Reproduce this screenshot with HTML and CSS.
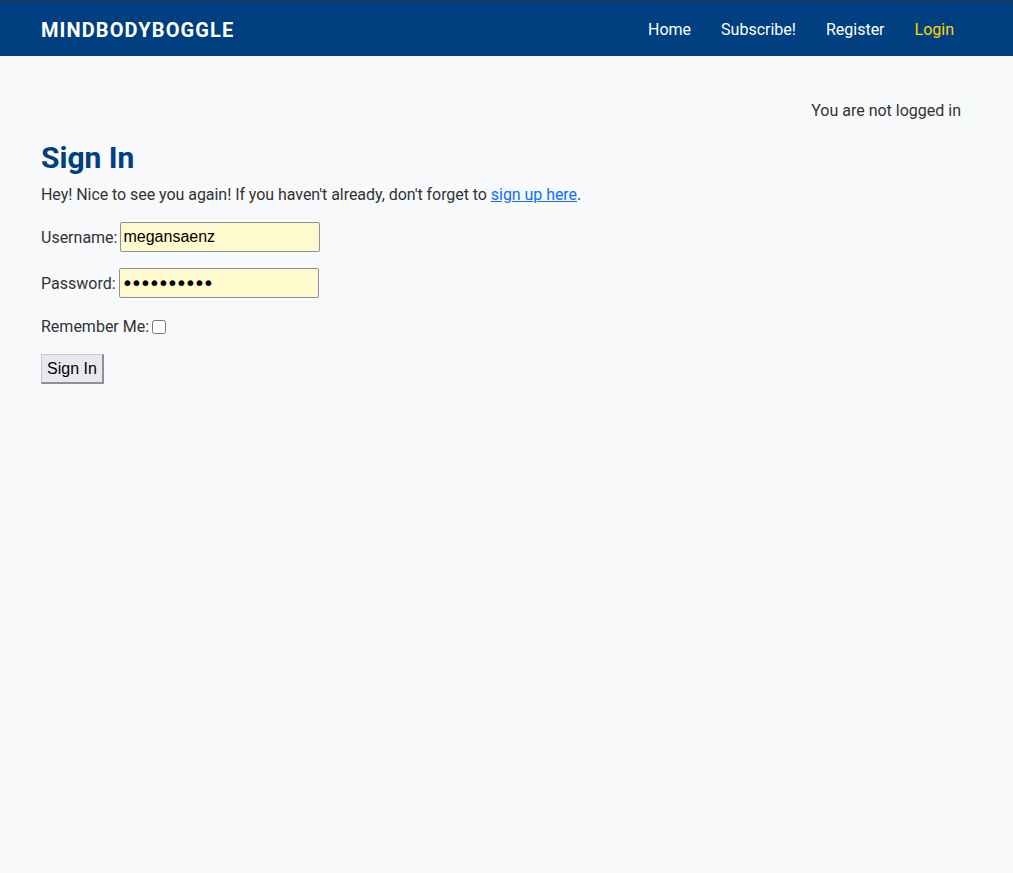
FILE: index.html
```html
<!DOCTYPE html>
<html>
<head>
<meta charset="utf-8">
<title>Sign In</title>
<link rel="stylesheet" href="styles.css">
</head>
<body>
<header class="topbar">
  <a class="brand" href="#">MINDBODYBOGGLE</a>
  <nav class="nav">
    <a href="#">Home</a>
    <a href="#">Subscribe!</a>
    <a href="#">Register</a>
    <a class="active" href="#">Login</a>
  </nav>
</header>
<main class="content">
  <p class="status">You are not logged in</p>
  <h1 class="title">Sign In</h1>
  <p class="intro">Hey! Nice to see you again! If you haven't already, don't forget to <a href="#">sign up here</a>.</p>
  <form class="login">
    <div class="row"><label>Username:</label> <input class="field" type="text" value="megansaenz"></div>
    <div class="row"><label>Password:</label> <input class="field pass" type="password" value="password12"></div>
    <div class="row row-check"><label>Remember Me:</label> <input class="check" type="checkbox"></div>
    <div class="row"><button class="btn" type="button">Sign In</button></div>
  </form>
</main>
</body>
</html>
```
FILE: styles.css
```css
html, body {
  margin: 0;
  padding: 0;
}
body {
  background: #f8f9fa;
  font-family: Roboto, "Liberation Sans", sans-serif;
  font-size: 16px;
  color: #333;
}
.topbar {
  display: flex;
  align-items: center;
  justify-content: space-between;
  height: 55px;
  border-top: 1px solid #2a2f3a;
  background: #004080;
  padding: 0 59px 0 41px;
}
.brand {
  color: #fff;
  font-weight: 700;
  font-size: 20px;
  letter-spacing: 1.1px;
  text-decoration: none;
  padding-top: 2px;
}
.nav {
  display: flex;
  gap: 30px;
  padding-top: 2px;
}
.nav a {
  color: #fff;
  text-decoration: none;
  font-size: 16px;
}
.nav a.active {
  color: #ffd700;
}
.content {
  padding: 0 52px 0 41px;
}
.status {
  text-align: right;
  margin: 0;
  padding-top: 45px;
  line-height: 19px;
}
.title {
  color: #004080;
  font-size: 30px;
  font-weight: 700;
  margin: 20px 0 0;
  line-height: 36px;
}
.intro {
  margin: 9px 0 0;
  line-height: 19px;
  letter-spacing: -0.05px;
}
.intro a {
  color: #0d6efd;
}
.login {
  margin-top: 18px;
}
.row {
  display: flex;
  align-items: center;
  gap: 3px;
  margin-bottom: 16px;
}
.field {
  box-sizing: border-box;
  width: 200px;
  height: 30px;
  margin: 0;
  padding: 1px 2px;
  background: #fffacd;
  border: 1px solid #8f8f9d;
  border-radius: 2px;
  font-family: "Liberation Sans", Arial, sans-serif;
  font-size: 16px;
  color: #000;
}
.pass {
  font-family: "DejaVu Sans", sans-serif;
  font-size: 20px;
  letter-spacing: -2.8px;
  padding-left: 2px;
}
.check {
  margin: 0;
  width: 14px;
  height: 14px;
}
.row-check {
  margin-top: 19px;
  margin-bottom: 18px;
}
.btn {
  height: 30px;
  padding: 0 5px;
  background: #e9e9ed;
  border-style: solid;
  border-color: #c8c8d0 #8f8f9d #8f8f9d #c8c8d0;
  border-width: 1px 2px 2px 1px;
  font-family: "Liberation Sans", Arial, sans-serif;
  font-size: 16px;
  color: #000;
}
```
